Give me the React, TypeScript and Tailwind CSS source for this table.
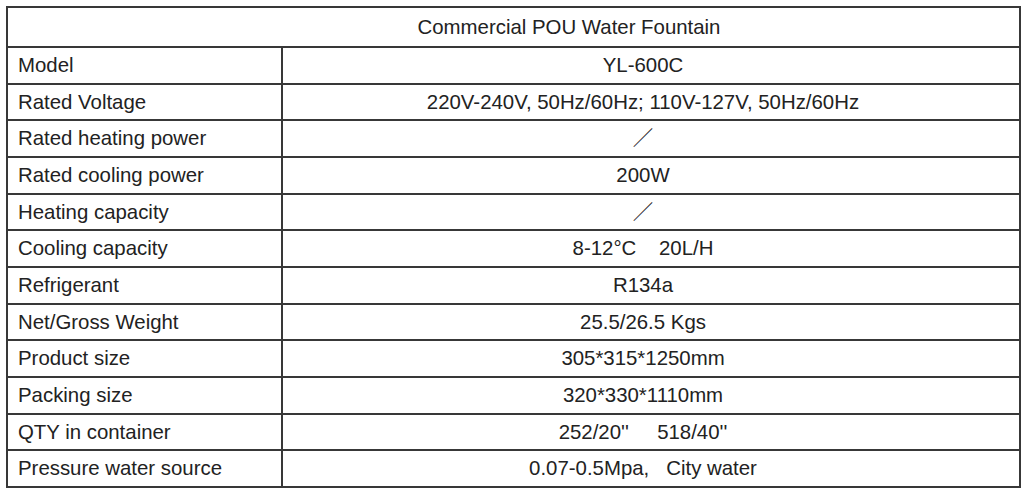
const rows: [string, string][] = [
  ["Model", "YL-600C"],
  ["Rated Voltage", "220V-240V, 50Hz/60Hz; 110V-127V, 50Hz/60Hz"],
  ["Rated heating power", "／"],
  ["Rated cooling power", "200W"],
  ["Heating capacity", "／"],
  ["Cooling capacity", "8-12°C\u00a0\u00a0\u00a0\u00a020L/H"],
  ["Refrigerant", "R134a"],
  ["Net/Gross Weight", "25.5/26.5 Kgs"],
  ["Product size", "305*315*1250mm"],
  ["Packing size", "320*330*1110mm"],
  ["QTY in container", "252/20''\u00a0\u00a0\u00a0\u00a0\u00a0518/40''"],
  ["Pressure water source", "0.07-0.5Mpa,\u00a0\u00a0\u00a0City water"],
];

export default function App() {
  return (
    <div className="w-[1024px] h-[489px] bg-white pt-[6px] pl-[6px]">
      <div
        className="grid w-[1015px] grid-cols-[273px_1fr] grid-rows-[38px_repeat(12,34.67px)] gap-[2px] bg-[#383838] p-[2px] text-[20.4px] text-[#222]"
        style={{ fontFamily: '"Liberation Sans", Arial, "Noto Sans CJK SC", sans-serif' }}
      >
        <div className="col-span-2 flex items-center justify-center bg-white pl-[111px]">
          Commercial POU Water Fountain
        </div>
        {rows.map(([label, value]) => (
          <div key={label} className="contents">
            <div className="flex items-center bg-white pl-[10px] whitespace-nowrap">{label}</div>
            <div className="flex items-center justify-center bg-white pr-4 whitespace-nowrap">{value}</div>
          </div>
        ))}
      </div>
    </div>
  );
}
